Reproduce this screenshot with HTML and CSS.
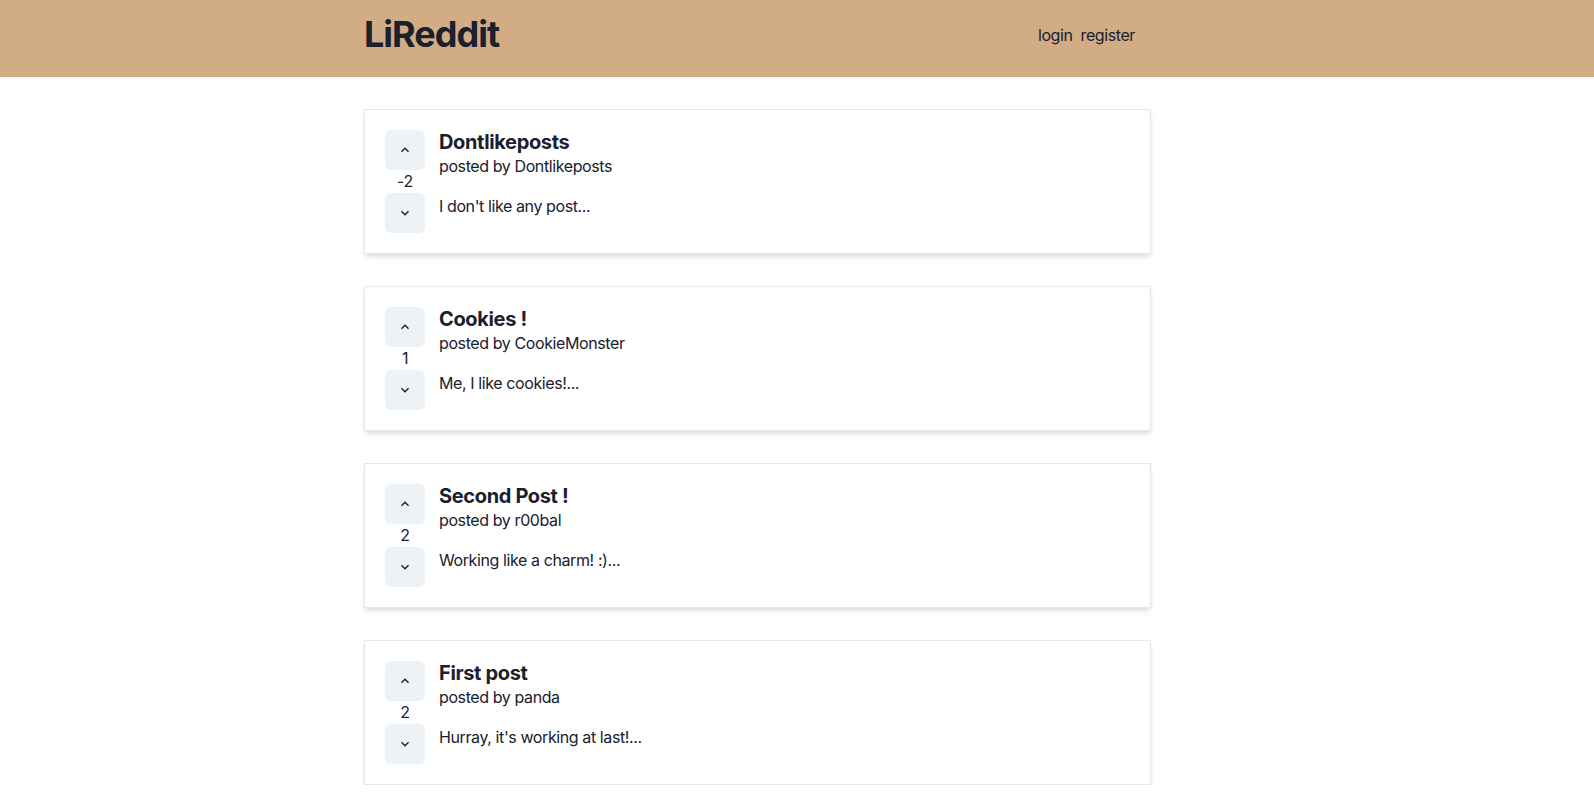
FILE: index.html
```html
<!DOCTYPE html>
<html>
<head>
<meta charset="utf-8">
<link rel="stylesheet" href="styles.css">
</head>
<body>
<header class="navbar">
  <div class="nav-inner">
    <h1 class="logo">LiReddit</h1>
    <nav class="links">
      <a class="link">login</a>
      <a class="link">register</a>
    </nav>
  </div>
</header>
<main class="feed">
  <article class="card">
    <div class="votes">
      <button class="vote"><svg viewBox="0 0 24 24" class="chev"><path d="M12 8l-6 6 1.41 1.41L12 10.83l4.59 4.58L18 14z"/></svg></button>
      <span class="score">-2</span>
      <button class="vote"><svg viewBox="0 0 24 24" class="chev"><path d="M16.59 8.59L12 13.17 7.41 8.59 6 10l6 6 6-6z"/></svg></button>
    </div>
    <div class="body">
      <h2 class="title">Dontlikeposts</h2>
      <p class="author">posted by Dontlikeposts</p>
      <p class="snippet">I don't like any post...</p>
    </div>
  </article>
  <article class="card">
    <div class="votes">
      <button class="vote"><svg viewBox="0 0 24 24" class="chev"><path d="M12 8l-6 6 1.41 1.41L12 10.83l4.59 4.58L18 14z"/></svg></button>
      <span class="score">1</span>
      <button class="vote"><svg viewBox="0 0 24 24" class="chev"><path d="M16.59 8.59L12 13.17 7.41 8.59 6 10l6 6 6-6z"/></svg></button>
    </div>
    <div class="body">
      <h2 class="title">Cookies !</h2>
      <p class="author">posted by CookieMonster</p>
      <p class="snippet">Me, I like cookies!...</p>
    </div>
  </article>
  <article class="card">
    <div class="votes">
      <button class="vote"><svg viewBox="0 0 24 24" class="chev"><path d="M12 8l-6 6 1.41 1.41L12 10.83l4.59 4.58L18 14z"/></svg></button>
      <span class="score">2</span>
      <button class="vote"><svg viewBox="0 0 24 24" class="chev"><path d="M16.59 8.59L12 13.17 7.41 8.59 6 10l6 6 6-6z"/></svg></button>
    </div>
    <div class="body">
      <h2 class="title">Second Post !</h2>
      <p class="author">posted by r00bal</p>
      <p class="snippet">Working like a charm! :)...</p>
    </div>
  </article>
  <article class="card">
    <div class="votes">
      <button class="vote"><svg viewBox="0 0 24 24" class="chev"><path d="M12 8l-6 6 1.41 1.41L12 10.83l4.59 4.58L18 14z"/></svg></button>
      <span class="score">2</span>
      <button class="vote"><svg viewBox="0 0 24 24" class="chev"><path d="M16.59 8.59L12 13.17 7.41 8.59 6 10l6 6 6-6z"/></svg></button>
    </div>
    <div class="body">
      <h2 class="title">First post</h2>
      <p class="author">posted by panda</p>
      <p class="snippet">Hurray, it's working at last!...</p>
    </div>
  </article>
</main>
</body>
</html>
```
FILE: styles.css
```css
* { box-sizing: border-box; }
html, body { margin: 0; padding: 0; }
body {
  font-family: Inter, "Noto Sans", sans-serif;
  color: #1A202C;
  background: #fff;
  font-size: 16px;
  line-height: 1.5;
  letter-spacing: -0.4px;
}
.navbar {
  background: #D2AC85;
  padding: 13px 0 21px;
}
.nav-inner {
  margin-left: 364px;
  width: 771px;
  height: 43px;
  display: flex;
  align-items: center;
  justify-content: space-between;
}
.logo {
  margin: 0;
  font-size: 36px;
  font-weight: 700;
  line-height: 43px;
  letter-spacing: -1px;
}
.links { display: flex; gap: 8px; }
.link { color: #1A202C; font-size: 16px; cursor: pointer; }
.feed {
  margin: 32px 0 0 364px;
  width: 787px;
  display: flex;
  flex-direction: column;
  gap: 32px;
}
.card {
  display: flex;
  align-items: flex-start;
  padding: 20px;
  border: 1px solid #E2E8F0;
  box-shadow: 0 4px 6px -1px rgba(0,0,0,0.1), 0 2px 4px -1px rgba(0,0,0,0.06);
  background: #fff;
}
.votes {
  display: flex;
  flex-direction: column;
  align-items: center;
  margin-right: 14px;
  width: 40px;
}
.vote {
  width: 40px;
  height: 40px;
  border: none;
  border-radius: 6px;
  background: #EDF2F7;
  display: flex;
  align-items: center;
  justify-content: center;
  padding: 0;
}
.chev { width: 16px; height: 16px; fill: #1A202C; }
.score { line-height: 23px; font-size: 16px; }
.body { display: flex; flex-direction: column; }
.title {
  margin: 0;
  font-size: 20px;
  font-weight: 700;
  line-height: 24px;
  letter-spacing: -0.35px;
}
.author { margin: 0; line-height: 24px; }
.snippet { margin: 16px 0 0; line-height: 24px; }
```
